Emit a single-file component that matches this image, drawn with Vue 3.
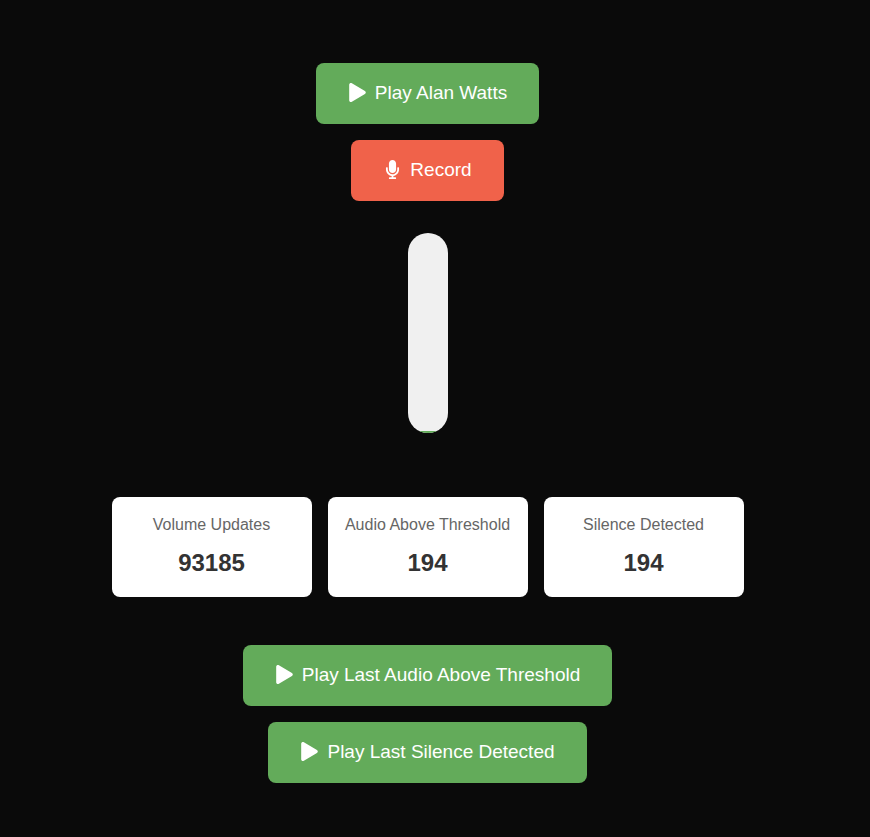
<script setup>
import { computed, ref } from 'vue'

const level = ref(1)
const fillStyle = computed(() => ({ height: `${level.value}%` }))

const stats = ref([
  { label: 'Volume Updates', value: 93185 },
  { label: 'Audio Above Threshold', value: 194 },
  { label: 'Silence Detected', value: 194 },
])

const playPath =
  'M424.4 214.7L72.4 6.6C43.8-10.3 0 6.1 0 47.9V464c0 37.5 40.7 60.1 72.4 41.3l352-208c31.4-18.5 31.5-64.1 0-82.6z'
const micPath =
  'M176 352c53.02 0 96-42.98 96-96V96c0-53.02-42.98-96-96-96S80 42.98 80 96v160c0 53.02 42.98 96 96 96zm160-160h-16c-8.84 0-16 7.16-16 16v48c0 74.8-64.49 134.82-140.79 127.38C96.71 376.89 48 317.11 48 250.3V208c0-8.84-7.16-16-16-16H16c-8.84 0-16 7.16-16 16v40.16c0 89.64 63.97 169.55 152 181.69V464H96c-8.84 0-16 7.16-16 16v16c0 8.84 7.16 16 16 16h160c8.84 0 16-7.16 16-16v-16c0-8.84-7.16-16-16-16h-56v-33.77C285.71 418.47 352 344.9 352 256v-48c0-8.84-7.16-16-16-16z'
</script>

<template>
  <main class="page">
    <div class="actions">
      <button type="button" class="btn">
        <svg class="icon" viewBox="0 0 448 512" aria-hidden="true"><path :d="playPath" /></svg>
        <span>Play Alan Watts</span>
      </button>
      <button type="button" class="btn record">
        <svg class="icon" viewBox="0 0 352 512" aria-hidden="true"><path :d="micPath" /></svg>
        <span>Record</span>
      </button>
    </div>

    <div class="meter" role="meter" :aria-valuenow="level" aria-valuemin="0" aria-valuemax="100">
      <div class="fill" :style="fillStyle"></div>
    </div>

    <dl class="stats">
      <div v-for="stat in stats" :key="stat.label" class="card">
        <dt>{{ stat.label }}</dt>
        <dd>{{ stat.value }}</dd>
      </div>
    </dl>

    <div class="actions">
      <button type="button" class="btn">
        <svg class="icon" viewBox="0 0 448 512" aria-hidden="true"><path :d="playPath" /></svg>
        <span>Play Last Audio Above Threshold</span>
      </button>
      <button type="button" class="btn">
        <svg class="icon" viewBox="0 0 448 512" aria-hidden="true"><path :d="playPath" /></svg>
        <span>Play Last Silence Detected</span>
      </button>
    </div>
  </main>
</template>

<style>
body {
  margin: 0;
  background: #0a0a0a;
}
</style>

<style scoped>
.page {
  box-sizing: border-box;
  min-height: 100vh;
  padding: 63px 15px 48px 0;
  display: flex;
  flex-direction: column;
  align-items: center;
  font-family: "Liberation Sans", Arial, sans-serif;
}

.actions {
  display: flex;
  flex-direction: column;
  align-items: center;
  gap: 16px;
}

.btn {
  display: flex;
  align-items: center;
  gap: 8px;
  padding: 18px 32px 20px;
  border: 0;
  border-radius: 8px;
  background: #63ab5a;
  color: #fff;
  font-family: inherit;
  font-size: 19px;
  line-height: 23px;
  cursor: pointer;
}

.record {
  background: #f0624a;
}

.icon {
  width: 19px;
  height: 19px;
  fill: currentColor;
}

.meter {
  display: flex;
  flex-direction: column;
  justify-content: flex-end;
  width: 40px;
  height: 200px;
  margin: 32px 0 64px;
  border-radius: 20px;
  background: #f0f0f0;
  overflow: hidden;
}

.fill {
  background: #63ab5a;
}

.stats {
  display: flex;
  flex-wrap: wrap;
  justify-content: center;
  gap: 16px;
  margin: 0 0 48px;
}

.card {
  box-sizing: border-box;
  min-width: 200px;
  padding: 16px;
  display: flex;
  flex-direction: column;
  gap: 8px;
  border-radius: 8px;
  background: #fff;
  text-align: center;
}

.card dt {
  color: #666;
  font-size: 16px;
  line-height: 24px;
}

.card dd {
  margin: 0;
  color: #333;
  font-size: 24px;
  font-weight: 700;
  line-height: 36px;
}
</style>
